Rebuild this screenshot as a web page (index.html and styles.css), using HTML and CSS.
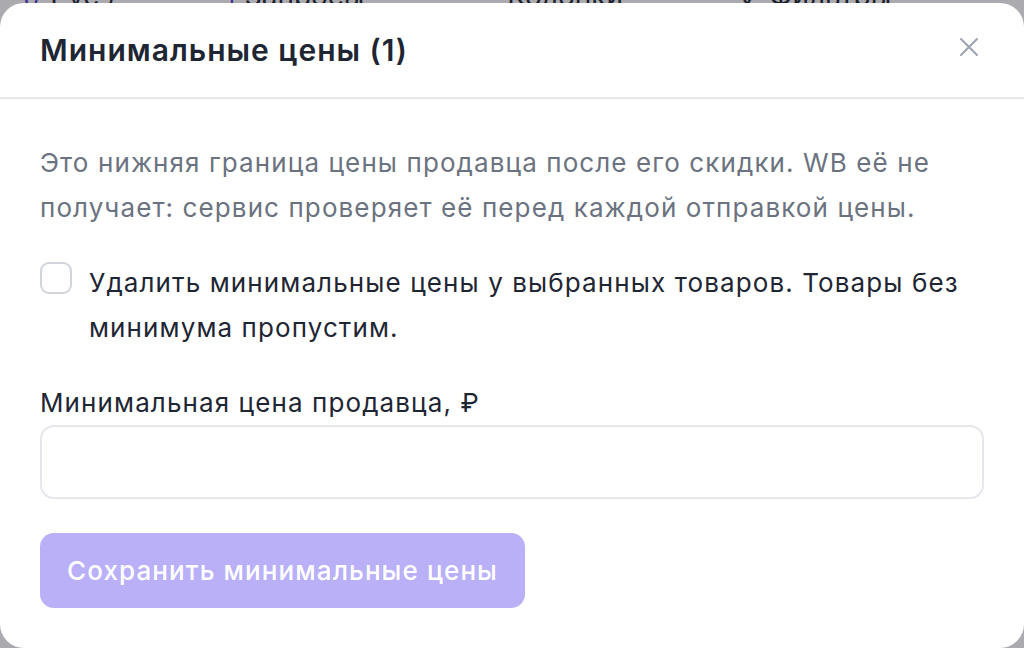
FILE: index.html
```html
<!DOCTYPE html>
<html lang="ru">
<head>
    <meta charset="UTF-8">
    <meta name="viewport" content="width=device-width, initial-scale=1.0">
    <title>Минимальные цены</title>
    <link rel="stylesheet" href="styles.css">
</head>
<body>
    <!-- Toolbar behind the overlay -->
    <div class="toolbar">
        <span class="tool"><span class="tool-mark">(/</span> Рус /</span>
        <span class="tool"><span class="tool-mark">|</span> Запросы</span>
        <span class="tool">☰ Колонки</span>
        <span class="tool">▽ Фильтры</span>
    </div>

    <div class="overlay">
        <div class="modal">
            <div class="modal-header">
                <h2>Минимальные цены (1)</h2>
                <span class="close" aria-label="Закрыть">
                    <svg width="22" height="22" viewBox="0 0 22 22" fill="none" stroke="currentColor" stroke-width="2" stroke-linecap="round">
                        <path d="M3 3L19 19M19 3L3 19"/>
                    </svg>
                </span>
            </div>

            <div class="modal-body">
                <p class="hint">Это нижняя граница цены продавца после его скидки. WB её не получает: сервис проверяет её перед каждой отправкой цены.</p>

                <label class="check-row">
                    <input type="checkbox" class="check">
                    <span>Удалить минимальные цены у выбранных товаров. Товары без минимума пропустим.</span>
                </label>

                <label class="field-label" for="minPrice">Минимальная цена продавца, ₽</label>
                <input type="text" id="minPrice" class="field">

                <button class="btn-save" disabled>Сохранить минимальные цены</button>
            </div>
        </div>
    </div>
</body>
</html>
```

FILE: styles.css
```css
html, body {
    margin: 0;
    height: 100%;
}

body {
    font-family: Inter, "Noto Sans", sans-serif;
    background: #f3f4f6;
    overflow: hidden;
}

.toolbar {
    display: flex;
    gap: 110px;
    padding: 0 22px;
    height: 40px;
    margin-top: -24px;
    align-items: center;
    font-size: 28px;
    color: #1f2937;
    white-space: nowrap;
}

.tool-mark {
    color: #5b3fd6;
}

/* Overlay */
.overlay {
    position: fixed;
    inset: 0;
    background: rgba(17, 17, 24, 0.32);
}

.modal {
    position: absolute;
    top: 3px;
    left: 0;
    right: 0;
    bottom: 0;
    background: #fff;
    border-radius: 24px;
}

.modal-header {
    display: flex;
    justify-content: space-between;
    align-items: center;
    height: 94px;
    padding: 0 44px 0 40px;
    border-bottom: 2px solid #e5e7eb;
}

.modal-header h2 {
    margin: 0;
    font-size: 30px;
    font-weight: 600;
    letter-spacing: 1px;
    color: #1f2633;
}

.close {
    color: #9ca3af;
    display: flex;
    margin-top: -6px;
}

.modal-body {
    padding: 41px 40px 40px;
    font-size: 26px;
    line-height: 45px;
    letter-spacing: 1.1px;
}

.hint {
    margin: 0;
    color: #6b7280;
}

.check-row {
    display: flex;
    gap: 17px;
    margin-top: 30px;
    color: #1f2633;
}

.check {
    appearance: none;
    flex: none;
    width: 32px;
    height: 32px;
    margin: 2px 0 0;
    border: 2px solid #d1d5db;
    border-radius: 9px;
    background: #fff;
}

.field-label {
    display: block;
    margin-top: 30px;
    color: #1f2633;
}

.field {
    display: block;
    box-sizing: border-box;
    width: 100%;
    height: 74px;
    margin: 0;
    border: 2px solid #e5e7eb;
    border-radius: 14px;
    font-size: 26px;
    padding: 0 20px;
}

.btn-save {
    display: block;
    margin-top: 34px;
    height: 75px;
    padding: 0 27px;
    border: none;
    border-radius: 14px;
    background: #b9b0f8;
    color: #fff;
    font-family: inherit;
    font-size: 26px;
    font-weight: 500;
    letter-spacing: 1.1px;
}
```
